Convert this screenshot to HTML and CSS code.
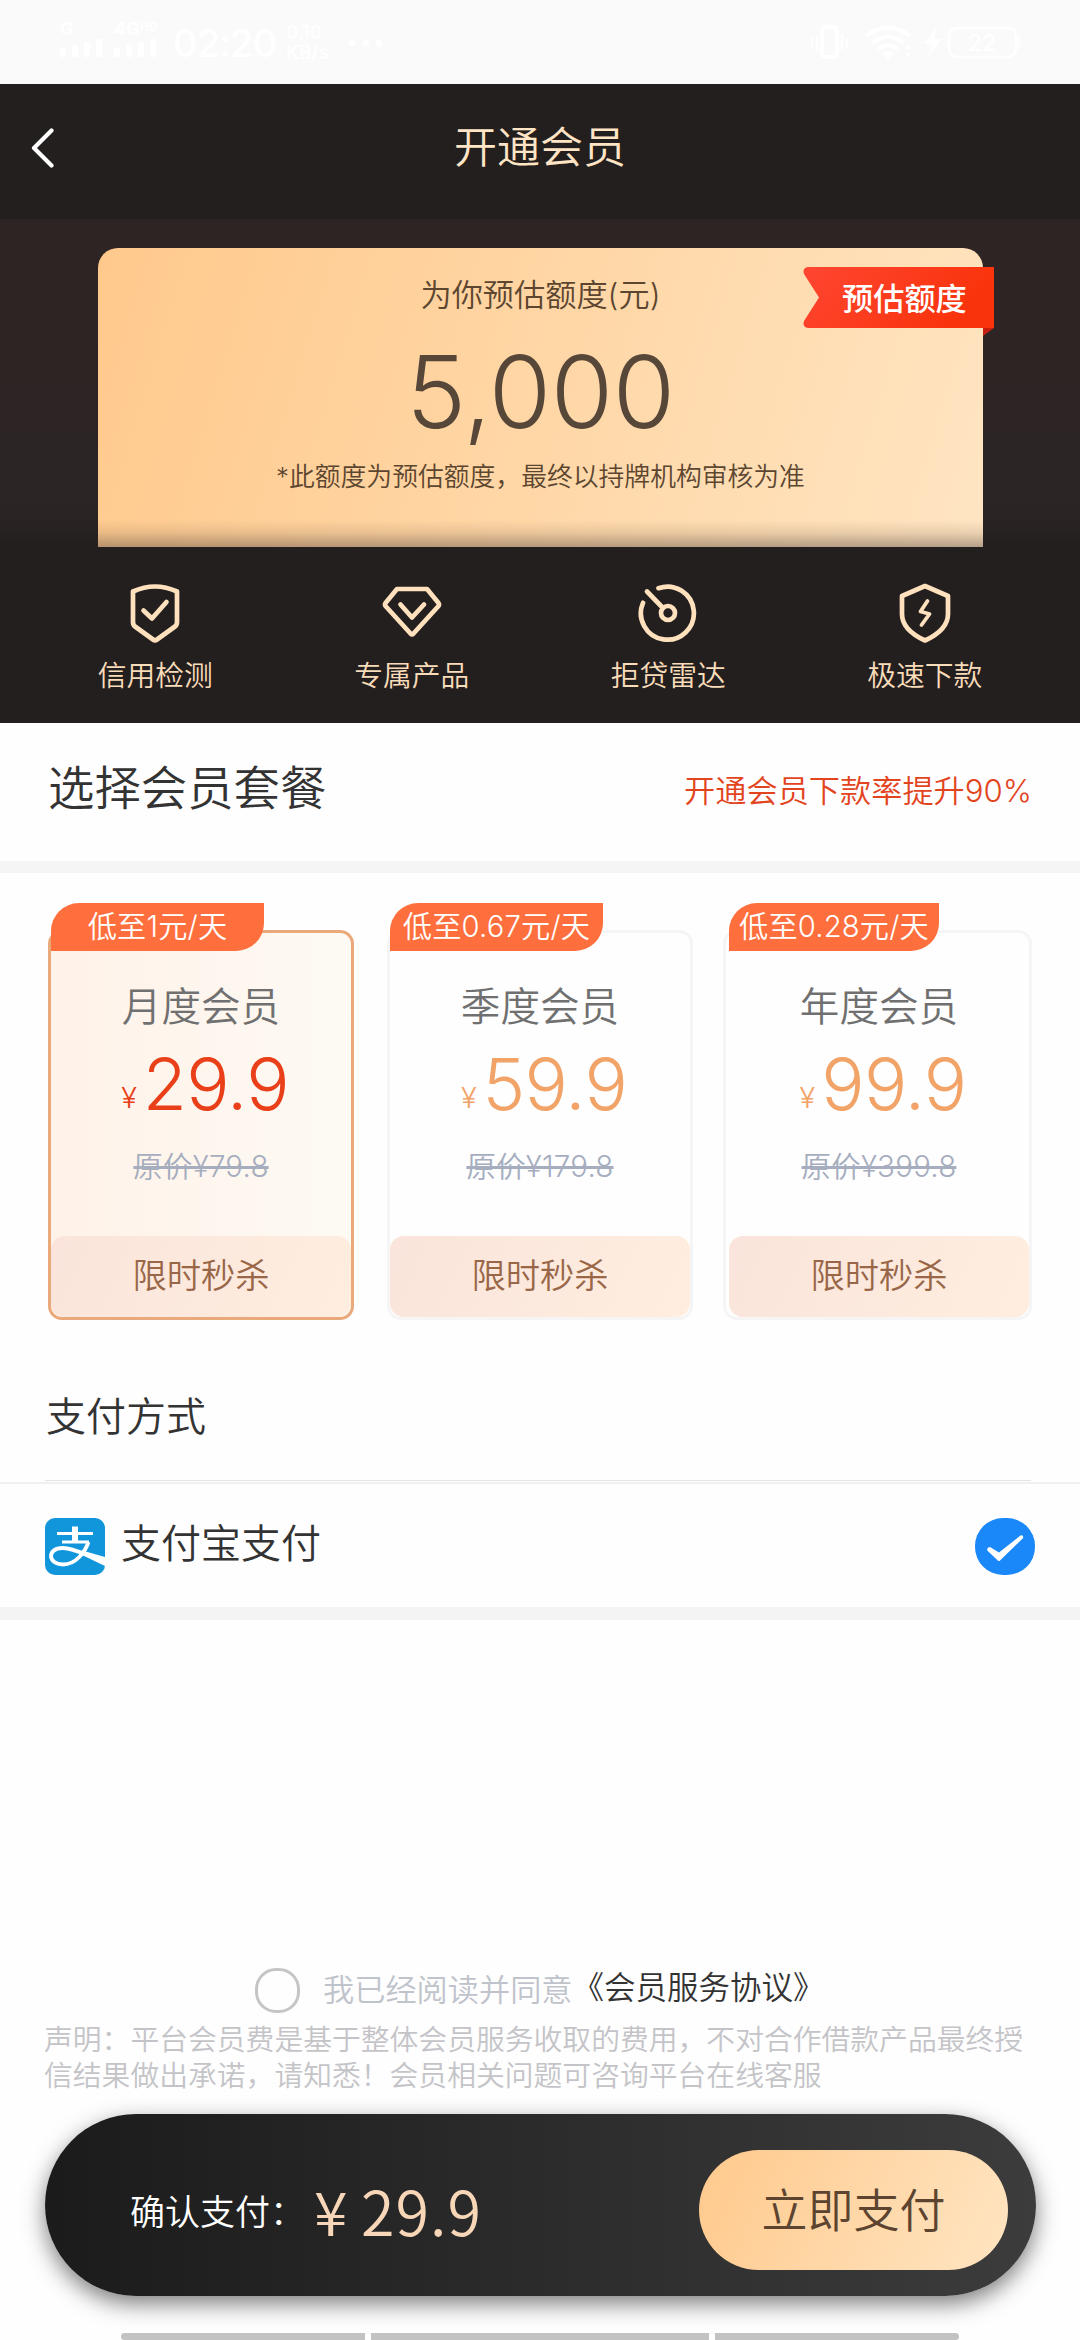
FILE: index.html
```html
<!DOCTYPE html>
<html lang="zh-CN">
<head>
<meta charset="utf-8">
<title>开通会员</title>
<link rel="stylesheet" href="styles.css">
</head>
<body>
<div class="screen">
  <div class="status">
    <div class="signal"><span class="net">G</span><svg width="43" height="20" viewBox="0 0 43 20"><path d="M3 19V10M15 19V7M27 19V4M39 19V1" stroke="#fff" stroke-width="6"/></svg></div>
    <div class="signal signal-hd"><span class="net">4G<sup>HD</sup></span><svg width="43" height="20" viewBox="0 0 43 20"><path d="M3 19V10M15 19V7M27 19V4M39 19V1" stroke="#fff" stroke-width="6"/></svg></div>
    <span class="clock">02:20</span>
    <div class="speed"><span>0.10</span><span>KB/s</span></div>
    <svg class="dots" width="36" height="8" viewBox="0 0 36 8"><g fill="#fff"><circle cx="4" cy="4" r="3.4"/><circle cx="18" cy="4" r="3.4"/><circle cx="31" cy="4" r="3.4"/></g></svg>
    <svg class="sysicons" width="212" height="40" viewBox="0 0 212 40" fill="none" stroke="#fff">
      <rect x="12" y="5" width="15" height="30" rx="3" stroke-width="4"/>
      <path d="M7 13v15M2 16v9M32 13v15M37 16v9" stroke-width="2.5"/>
      <path d="M56 14c13-11 31-11 44 0M62 21c10-8 22-8 32 0M68 27c6-5 14-5 20 0" stroke-width="4"/>
      <path d="M72 31c4-3 8-3 12 0l-6 6z" fill="#fff" stroke="none"/>
      <path d="M95 27l3-4 3 4zM95 31l3 4 3-4z" fill="#fff" stroke="none"/>
      <path d="M127 5l-13 17h8l-4 13 14-18h-8z" fill="#fff" stroke="none"/>
      <rect x="139" y="6" width="67" height="29" rx="8" stroke-width="2.5"/>
      <path d="M209 15v10" stroke-width="3"/>
      <text x="172" y="29" text-anchor="middle" class="battery">22</text>
    </svg>
  </div>

  <header class="navbar">
    <svg class="back" width="24" height="40" viewBox="0 0 24 40"><path d="M21.500 2.500L4 20L21.500 37.500" fill="none" stroke="#fff" stroke-width="4.200" stroke-linecap="round" stroke-linejoin="round"/></svg>
    <h1>开通会员</h1>
  </header>

  <section class="hero">
    <div class="quota">
      <div class="quota-label">为你预估额度(元)</div>
      <div class="quota-value">5,000</div>
      <div class="quota-note">*此额度为预估额度，最终以持牌机构审核为准</div>
      <div class="ribbon">
        <svg width="191" height="70" viewBox="0 0 191 70">
          <defs><linearGradient id="rb" x1="0" x2="1" y1="0" y2="0.300"><stop offset="0" stop-color="#ff4632"/><stop offset="1" stop-color="#f9330b"/></linearGradient></defs>
          <path d="M180 61h11l-11 8z" fill="#c81f10"/>
          <path d="M5 0H191V61H5Q-1 60 1 54L16 30.500L1 7Q-1 1 5 0Z" fill="url(#rb)"/>
        </svg>
        <span>预估额度</span>
      </div>
    </div>
  </section>

  <section class="features">
    <div class="feature">
      <svg width="60" height="60" viewBox="0 0 60 60"><path d="M8 8.500Q30 -1.500 52 8.500V39Q52 42 50 43.500L32 56.500Q30 58 28 56.500L10 43.500Q8 42 8 39Z"/><path d="M18.500 27.500L27 35.500L41.500 19"/></svg>
      <span>信用检测</span>
    </div>
    <div class="feature">
      <svg width="60" height="60" viewBox="0 0 60 60"><path d="M15 6H45L56.500 20Q57.500 21.500 56.500 23L31.500 50.500Q30 52 28.500 50.500L3.500 23Q2.500 21.500 3.500 20Z"/><path d="M18.500 21.500L30 34.500L42 21.500"/></svg>
      <span>专属产品</span>
    </div>
    <div class="feature">
      <svg width="60" height="60" viewBox="0 0 60 60"><path d="M20.500 5.200A26.500 26.500 0 1 1 5 19.800"/><circle cx="30" cy="30" r="7"/><path d="M24.500 24.500L9 8.500"/></svg>
      <span>拒贷雷达</span>
    </div>
    <div class="feature">
      <svg width="60" height="60" viewBox="0 0 60 60"><path d="M30 3L53 13V31C53 43 42 52 30 57.500C18 52 7 43 7 31V13Z"/><path d="M32.500 18L25.500 28.500L34.500 31L26.500 42" stroke-width="3.800"/></svg>
      <span>极速下款</span>
    </div>
  </section>

  <section class="plans-head">
    <h2>选择会员套餐</h2>
    <span class="promo">开通会员下款率提升90%</span>
  </section>

  <section class="plans">
    <article class="plan plan-active">
      <span class="tag">低至1元/天</span>
      <h3>月度会员</h3>
      <div class="price"><i>¥</i><b>29.9</b></div>
      <div class="was">原价¥79.8</div>
      <div class="sale">限时秒杀</div>
    </article>
    <article class="plan">
      <span class="tag">低至0.67元/天</span>
      <h3>季度会员</h3>
      <div class="price"><i>¥</i><b>59.9</b></div>
      <div class="was">原价¥179.8</div>
      <div class="sale">限时秒杀</div>
    </article>
    <article class="plan plan-wide">
      <span class="tag">低至0.28元/天</span>
      <h3>年度会员</h3>
      <div class="price"><i>¥</i><b>99.9</b></div>
      <div class="was">原价¥399.8</div>
      <div class="sale">限时秒杀</div>
    </article>
  </section>

  <section class="pay-head"><h2>支付方式</h2></section>
  <section class="pay-row">
    <svg width="60" height="57" viewBox="0 0 60 57">
      <rect width="60" height="57" rx="10" fill="#1296db"/>
      <path d="M12 15.500H48M17 24H44" stroke="#fff" stroke-width="2.800" fill="none"/>
      <path d="M27 8.500H33V25H27Z" fill="#fff"/>
      <path d="M43.500 24C40 34 31 46.500 18 46.500C2 46.500 2 29.500 18 30C30 30.500 40 37 60 43.500" fill="none" stroke="#fff" stroke-width="3.800"/>
      <path d="M39 33L60 39V48L35 36Z" fill="#fff"/>
    </svg>
    <span>支付宝支付</span>
    <svg class="checked" width="60" height="57" viewBox="0 0 60 57"><rect width="60" height="57" rx="28" fill="#1a88f8"/><path d="M12.300 32.500Q11.500 29.500 15 29L24 34.500L45.500 17.500Q48.500 16.500 48.200 20L25 42.500Q24 43.500 22.800 42.500Z" fill="#fff"/></svg>
  </section>

  <section class="agree">
    <i class="radio"></i><span>我已经阅读并同意</span><a>《会员服务协议》</a>
  </section>
  <p class="notice">声明：平台会员费是基于整体会员服务收取的费用，不对合作借款产品最终授<br>信结果做出承诺，请知悉！会员相关问题可咨询平台在线客服</p>

  <footer class="paybar">
    <span class="pay-label">确认支付：</span>
    <span class="pay-sum"><i>¥</i>29.9</span>
    <button class="pay-btn">立即支付</button>
  </footer>
  <div class="sysnav"><i></i><i></i><i></i></div>
</div>
</body>
</html>
```
FILE: styles.css
```css
* { box-sizing: border-box; margin: 0; padding: 0; }
body {
  background: #fff;
  color: #333;
  font-family: Inter, "Noto Sans CJK SC", sans-serif;
  font-weight: 350;
}
h1, h2, h3, b, i { font-weight: 350; font-style: normal; }
svg { display: block; flex: none; }
span, a, h1, h2, h3 { white-space: nowrap; }
.screen {
  width: 1080px;
  height: 2340px;
  display: flex;
  flex-direction: column;
  overflow: hidden;
  background: #fefefe;
}
.screen > * { flex: none; }

.status {
  height: 84px;
  background: #fafafa;
  color: #fff;
  display: flex;
  padding: 20px 58px 0 60px;
}
.signal { width: 54px; height: 40px; }
.signal-hd { width: 59px; }
.net { display: block; height: 18px; font-size: 18px; line-height: 18px; font-weight: 700; }
.net sup { font-size: 12px; line-height: 1px; vertical-align: 4px; }
.clock { width: 113px; font-size: 38px; line-height: 47px; font-weight: 500; letter-spacing: -0.8px; }
.speed { width: 62px; font-size: 19px; line-height: 20px; font-weight: 500; padding-top: 3px; display: flex; flex-direction: column; }
.dots { margin-top: 19px; }
.sysicons { margin: 2px 0 0 auto; }
.battery { font: 500 23px Inter, sans-serif; fill: #fff; stroke: none; }

.navbar {
  height: 135px;
  background: #241f1f;
  display: flex;
  align-items: center;
  padding: 0 54px 8px 30px;
}
.navbar h1 { flex: 1; text-align: center; font-size: 43px; line-height: 60px; color: #ffe5c5; margin-top: -2px; }

.hero {
  height: 328px;
  padding: 28.500px 97px 0 98px;
  background: linear-gradient(180deg, #2e2423 0, #2c2525 85%, #282322 94%, #241f1f 100%);
}
.quota {
  position: relative;
  height: 299.500px;
  border-radius: 20px 20px 0 0;
  text-align: center;
  color: #5c4630;
  background:
    linear-gradient(180deg, rgba(90,70,55,0) 91%, rgba(90,70,55,.12) 95%, rgba(80,65,60,.42) 100%),
    linear-gradient(107deg, #ffc98c 0, #ffd5a3 45%, #ffe5c2 100%);
}
.quota-label { padding-top: 25px; font-size: 31.200px; line-height: 44px; }
.quota-value { margin-top: 21px; font-size: 101px; line-height: 106px; font-weight: 320; color: #574739; letter-spacing: -0.4px; }
.quota-note { margin-top: 13px; font-size: 25.800px; line-height: 40px; }
.ribbon { position: absolute; left: 704.500px; top: 19.500px; width: 191px; height: 70px; }
.ribbon span {
  position: absolute;
  left: 39.500px;
  top: 10px;
  color: #fff;
  font-size: 31.200px;
  line-height: 44px;
  font-weight: 500;
}

.features {
  height: 176px;
  padding: 36px 27px 0;
  background: #241f1f;
  display: grid;
  grid-template-columns: repeat(4, 1fr);
}
.feature { display: flex; flex-direction: column; align-items: center; gap: 11px; color: #f9dcb9; font-size: 28.800px; line-height: 44px; }
.feature svg { fill: none; stroke: #ffe1bd; stroke-width: 4.700; stroke-linecap: round; stroke-linejoin: round; }

.plans-head {
  height: 150px;
  border-bottom: 12px solid #f5f5f5;
  padding: 0 48px 8px 48px;
  display: flex;
  align-items: center;
  justify-content: space-between;
}
.plans-head h2 { font-size: 46.400px; line-height: 60px; }
.promo { font-size: 31.200px; line-height: 44px; color: #e2441d; margin-top: 5px; }

.plans {
  height: 479px;
  padding: 57px 48px 0;
  display: grid;
  grid-template-columns: 339px 336px 309px;
}
.plan {
  position: relative;
  width: 306px;
  height: 390px;
  border: 3px solid #f5f5f5;
  border-radius: 14px;
  text-align: center;
  color: #f1a368;
}
.plan-wide { width: 309px; padding-left: 3px; }
.plan-active { border-color: #eaa97a; background: linear-gradient(90deg, #fff2e8, #fdfaf4); color: #e9401a; }
.tag {
  position: absolute;
  left: 0;
  top: -30px;
  width: 213px;
  height: 48px;
  border-radius: 28px 0 28px 0;
  background: #ff6f3e;
  color: #fff;
  font-size: 29.200px;
  line-height: 48px;
  letter-spacing: 0.2px;
}
.plan-wide .tag { left: 3px; width: 210px; }
.plan h3 { padding-top: 46px; font-size: 39.600px; line-height: 56px; color: #707070; }
.price { height: 90px; margin-top: 4px; padding-left: 8px; display: flex; justify-content: center; align-items: baseline; line-height: 90px; }
.price i { font-size: 29px; margin-right: 6px; position: relative; top: -2px; }
.price b { font-size: 72px; font-weight: 330; letter-spacing: -0.700px; }
.was { margin-top: 16px; font-size: 29.500px; line-height: 42px; color: #a5adbf; text-decoration: line-through; text-decoration-thickness: 3px; letter-spacing: 0.2px; }
.sale {
  position: absolute;
  left: 0;
  bottom: 0;
  width: 300px;
  height: 81px;
  border-radius: 14px;
  background: linear-gradient(115deg, #fae4db, #ffeedf);
  color: #996748;
  font-size: 34.300px;
  line-height: 79px;
}
.plan-wide .sale { left: 3px; }

.pay-head { height: 129px; margin: 0 49px 0 45px; border-bottom: 1px solid #e4e4e4; padding: 35px 1px 0; }
.pay-head h2 { font-size: 40px; line-height: 60px; }
.pay-row {
  height: 138px;
  margin-top: 1px;
  border-top: 2px solid #f0f0f0;
  border-bottom: 13px solid #f4f4f4;
  padding: 2px 45px 0 45px;
  display: flex;
  align-items: center;
  gap: 16px;
  font-size: 40px;
}
.pay-row span { line-height: 56px; margin-top: -6px; }
.checked { margin-left: auto; }

.agree { margin-top: 346px; height: 48px; padding-left: 255px; display: flex; align-items: center; font-size: 31.200px; line-height: 48px; color: #bfc3cb; }
.radio { width: 45px; height: 45px; border: 3px solid #c5c5c5; border-radius: 21px; margin-right: 23px; }
.agree a { color: #333; margin-top: -5px; font-size: 31.500px; }
.notice { padding: 8px 0 0 44px; height: 100px; font-size: 28.800px; line-height: 36px; color: #c4c4c8; white-space: nowrap; }

.paybar {
  margin: 0 44px 0 45px;
  height: 182px;
  border-radius: 91px;
  background: linear-gradient(90deg, #1b1b1b, #3c3c3c);
  box-shadow: 0 8px 22px rgba(0,0,0,.5);
  display: flex;
  align-items: center;
  padding: 14px 28px 0 85px;
  color: #fff;
}
.pay-label { width: 184px; font-size: 35px; line-height: 50px; }
.pay-sum { font: 350 61px/80px "Noto Sans CJK SC", sans-serif; color: #f8d6b8; display: flex; letter-spacing: 1px; margin-top: -5px; }
.pay-sum i { width: 47px; }
.pay-btn {
  margin: 7px 0 12px auto;
  width: 309px;
  height: 120px;
  border: 0;
  border-radius: 60px;
  background: linear-gradient(115deg, #ffc98c, #ffe5c2);
  color: #5c4430;
  font: 350 46px/60px "Noto Sans CJK SC", sans-serif;
  padding-bottom: 5px;
}
.sysnav { margin-top: auto; height: 7px; padding: 0 121px; display: grid; grid-template-columns: 244px 338px 244px; gap: 6px; }
.sysnav i { background: #c2c2c2; }
.sysnav i:first-child { border-radius: 4px 0 0 4px; }
.sysnav i:last-child { border-radius: 0 4px 4px 0; }
```
